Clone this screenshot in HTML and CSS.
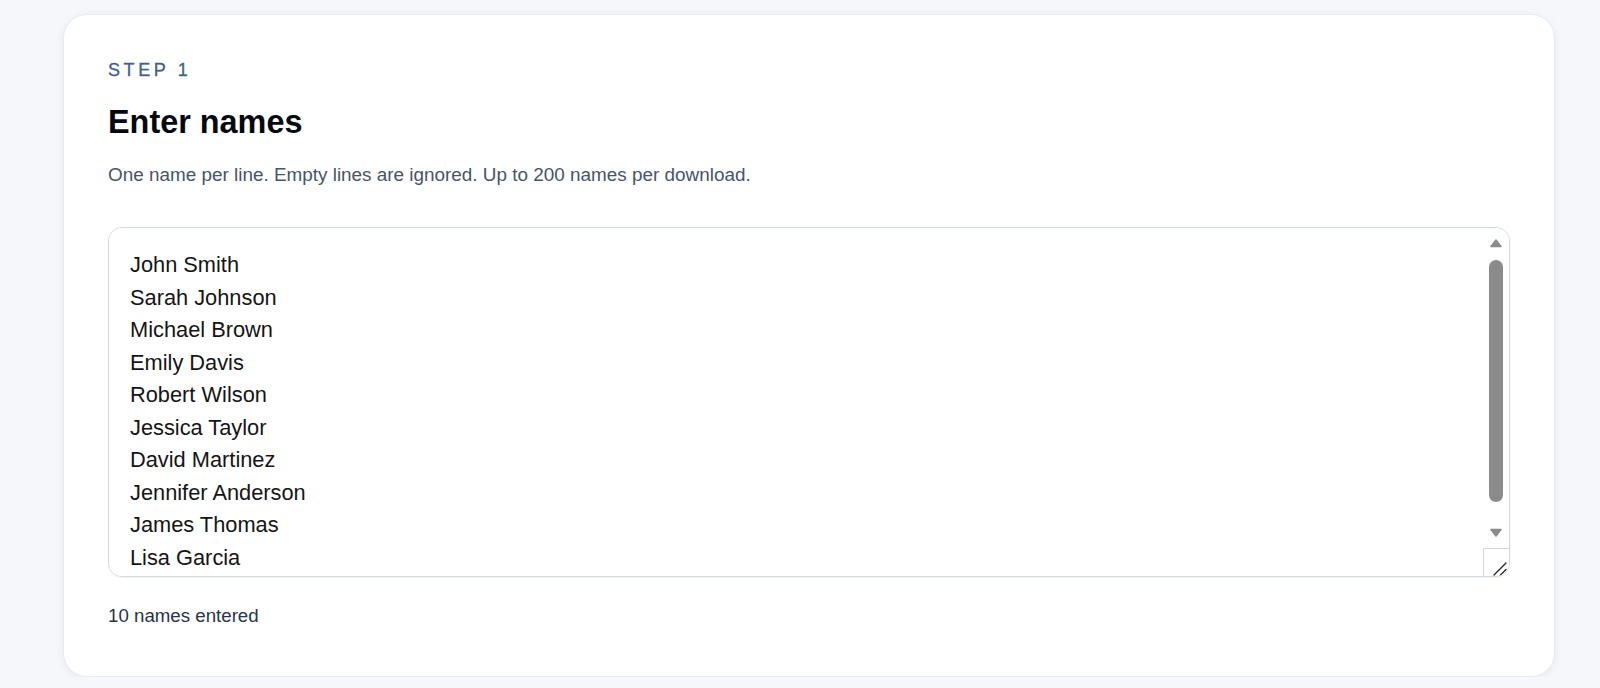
FILE: index.html
```html
<!DOCTYPE html>
<html lang="en">

<head>
    <meta charset="UTF-8">
    <meta name="viewport" content="width=device-width, initial-scale=1.0">
    <title>Name Cards - Enter names</title>
    <link rel="stylesheet" href="styles.css">
</head>

<body>
    <section class="step-card">
        <div class="step-label">Step 1</div>
        <h2 class="step-title">Enter names</h2>
        <p class="step-hint">One name per line. Empty lines are ignored. Up to 200 names per download.</p>

        <div class="names-field">
            <textarea id="names" class="names-input" spellcheck="false">John Smith
Sarah Johnson
Michael Brown
Emily Davis
Robert Wilson
Jessica Taylor
David Martinez
Jennifer Anderson
James Thomas
Lisa Garcia
</textarea>

            <!-- drawn scrollbar, the native one is hidden -->
            <div class="scroll-rail" aria-hidden="true">
                <span class="scroll-arrow">
                    <svg width="14" height="10" viewBox="0 0 14 10">
                        <path d="M2 8.5 L7 2 L12 8.5 Z" fill="#8b8b8b" stroke="#8b8b8b" stroke-width="1.5" stroke-linejoin="round" />
                    </svg>
                </span>
                <span class="scroll-track"><span class="scroll-thumb"></span></span>
                <span class="scroll-arrow">
                    <svg width="14" height="10" viewBox="0 0 14 10">
                        <path d="M2 1.5 L7 8 L12 1.5 Z" fill="#8b8b8b" stroke="#8b8b8b" stroke-width="1.5" stroke-linejoin="round" />
                    </svg>
                </span>
                <span class="scroll-corner">
                    <svg width="26" height="28" viewBox="0 0 26 28">
                        <path d="M10 26 L22 14" stroke="#2a2a2a" stroke-width="1.4" stroke-linecap="round" />
                        <path d="M16 26.5 L22 20.5" stroke="#2a2a2a" stroke-width="1.4" stroke-linecap="round" />
                    </svg>
                </span>
            </div>
        </div>

        <div class="names-count"><span id="count">10</span> names entered</div>
    </section>

    <script>
        var namesElem = document.getElementById("names");
        var countElem = document.getElementById("count");

        function updateCount() {
            var lines = namesElem.value.split("\n").filter(function (line) {
                return line.trim() !== "";
            });
            countElem.textContent = Math.min(lines.length, 200);
        }

        namesElem.oninput = updateCount;
        updateCount();
    </script>
</body>

</html>
```

FILE: styles.css
```css
body {
    margin: 0;
    padding: 14px 45px 0 63px;
    background: #f5f7fa;
    font-family: 'Liberation Sans', Arial, sans-serif;
}

.step-card {
    box-sizing: border-box;
    width: 1492px;
    padding: 45px 44px 47px;
    background: #fff;
    border: 1px solid #e8ecf2;
    border-radius: 24px;
    box-shadow: 0 2px 10px rgba(15, 23, 42, 0.06);
}

.step-label {
    font-size: 18px;
    line-height: 20px;
    letter-spacing: 0.2em;
    text-transform: uppercase;
    color: #415f88;
    -webkit-text-stroke: 0.3px #415f88;
}

.step-title {
    margin: 23px 0 0;
    font-size: 32.4px;
    line-height: 38px;
    font-weight: bold;
    color: #05080f;
}

.step-hint {
    margin: 20px 0 0;
    font-size: 18.9px;
    line-height: 28px;
    color: #475569;
}

.names-field {
    position: relative;
    margin-top: 38px;
}

.names-input {
    display: block;
    box-sizing: border-box;
    width: 100%;
    height: 350px;
    padding: 21px 40px 0 21px;
    border: 1px solid #cfd8e3;
    border-radius: 14px;
    font-family: 'Liberation Sans', Arial, sans-serif;
    font-size: 21.8px;
    line-height: 32.5px;
    color: #151515;
    background: #fff;
    outline: none;
    resize: none;
    overflow-y: auto;
    scrollbar-width: none;
    box-shadow: 0 1px 2px rgba(15, 23, 42, 0.06);
}

.names-input::-webkit-scrollbar {
    display: none;
}

.scroll-rail {
    position: absolute;
    top: 1px;
    right: 1px;
    bottom: 1px;
    width: 26px;
    display: flex;
    flex-direction: column;
}

.scroll-arrow {
    height: 30px;
    display: flex;
    align-items: center;
    justify-content: center;
}

.scroll-track {
    flex: 1;
    display: flex;
    justify-content: center;
    padding-top: 2px;
}

.scroll-thumb {
    width: 14px;
    height: 242px;
    border-radius: 7px;
    background: #8b8b8b;
}

.scroll-corner {
    height: 28px;
    box-sizing: border-box;
    border-left: 1px solid #d6d6d6;
    border-top: 1px solid #d6d6d6;
    border-bottom-right-radius: 13px;
    background: #fff;
    overflow: hidden;
}

.scroll-corner svg {
    display: block;
}

.names-count {
    margin-top: 26px;
    font-size: 18.7px;
    line-height: 26px;
    color: #273449;
}
```
